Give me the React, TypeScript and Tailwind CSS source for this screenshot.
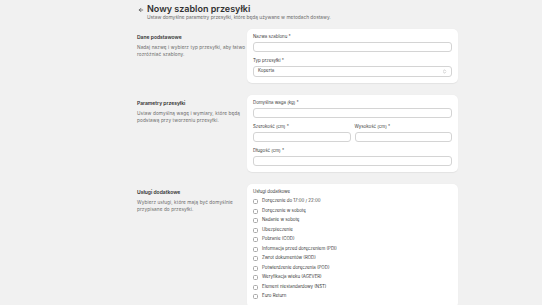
import { ArrowLeft, ChevronsUpDown } from "lucide-react";

const services = [
  "Doręczenie do 17:00 / 22:00",
  "Doręczenie w sobotę",
  "Nadanie w sobotę",
  "Ubezpieczenie",
  "Pobranie (COD)",
  "Informacja przed doręczeniem (PDI)",
  "Zwrot dokumentów (ROD)",
  "Potwierdzenie doręczenia (POD)",
  "Weryfikacja wieku (AGEVER)",
  "Element niestandardowy (NST)",
  "Euro Return",
];

const Field = ({ label }: { label: string }) => (
  <div>
    <div className="text-[4.4px] leading-[6px] text-[#3a3a3a] mb-[2px]">{label}</div>
    <div className="h-[10px] rounded-[3px] border border-[#d4d4d4] bg-white" />
  </div>
);

const SectionInfo = ({ title, desc }: { title: string; desc: string }) => (
  <div className="pt-[5px]">
    <div className="text-[5px] leading-[6px] font-semibold text-[#303030]">{title}</div>
    <p className="mt-[3.5px] text-[4.7px] leading-[7px] tracking-[0.1px] text-[#6b6b6b]">{desc}</p>
  </div>
);

export default function App() {
  return (
    <div
      className="min-h-[305px] bg-[#f1f1f1] overflow-hidden"
      style={{ fontFamily: "Inter, 'Noto Sans', sans-serif" }}
    >
      <div className="w-[322px] ml-[136px] pt-[4px]">
        <div className="flex items-start gap-[3px] pl-[2px]">
          <ArrowLeft className="w-[6px] h-[6px] mt-[2.5px] text-[#303030]" strokeWidth={2.5} />
          <div>
            <h1 className="text-[9px] leading-[10px] font-semibold text-[#303030]">Nowy szablon przesyłki</h1>
            <p className="text-[4.8px] leading-[6px] text-[#6b6b6b]">
              Ustaw domyślne parametry przesyłki, które będą używane w metodach dostawy.
            </p>
          </div>
        </div>

        <div className="mt-[9px] flex flex-col gap-[12px]">
          <div className="flex gap-[1px]">
            <div className="w-[110px] pl-[1px]">
              <SectionInfo title="Dane podstawowe" desc="Nadaj nazwę i wybierz typ przesyłki, aby łatwo rozróżniać szablony." />
            </div>
            <div className="flex-1 bg-white rounded-[5px] px-[6px] pt-[5px] pb-[6px] flex flex-col gap-[6px] shadow-[0_0.5px_1px_rgba(0,0,0,0.06)]">
              <Field label="Nazwa szablonu *" />
              <div>
                <div className="text-[4.4px] leading-[6px] text-[#3a3a3a] mb-[2px]">Typ przesyłki *</div>
                <div className="h-[11px] rounded-[3px] border border-[#d4d4d4] bg-white flex items-center justify-between px-[4px]">
                  <span className="text-[4.4px] text-[#3a3a3a]">Koperta</span>
                  <ChevronsUpDown className="w-[5px] h-[5px] text-[#8a8a8a]" />
                </div>
              </div>
            </div>
          </div>

          <div className="flex gap-[1px]">
            <div className="w-[110px] pl-[1px]">
              <SectionInfo title="Parametry przesyłki" desc="Ustaw domyślną wagę i wymiary, które będą podstawą przy tworzeniu przesyłki." />
            </div>
            <div className="flex-1 bg-white rounded-[5px] px-[6px] pt-[5px] pb-[6px] flex flex-col gap-[6px] shadow-[0_0.5px_1px_rgba(0,0,0,0.06)]">
              <Field label="Domyślna waga (kg) *" />
              <div className="grid grid-cols-2 gap-[4px]">
                <Field label="Szerokość (cm) *" />
                <Field label="Wysokość (cm) *" />
              </div>
              <Field label="Długość (cm) *" />
            </div>
          </div>

          <div className="flex gap-[1px]">
            <div className="w-[110px] pl-[1px]">
              <SectionInfo title="Usługi dodatkowe" desc="Wybierz usługi, które mają być domyślnie przypisane do przesyłki." />
            </div>
            <div className="flex-1 bg-white rounded-[5px] px-[6px] pt-[5px] pb-[6px] shadow-[0_0.5px_1px_rgba(0,0,0,0.06)]">
              <div className="text-[4.4px] leading-[6px] text-[#3a3a3a] mb-[2px]">Usługi dodatkowe</div>
              {services.map((s) => (
                <label key={s} className="flex items-center gap-[4px] h-[9.5px]">
                  <span className="w-[5px] h-[5px] rounded-[1.5px] border border-[#a8a8a8] bg-white" />
                  <span className="text-[4.4px] text-[#3a3a3a]">{s}</span>
                </label>
              ))}
            </div>
          </div>
        </div>
      </div>
    </div>
  );
}
